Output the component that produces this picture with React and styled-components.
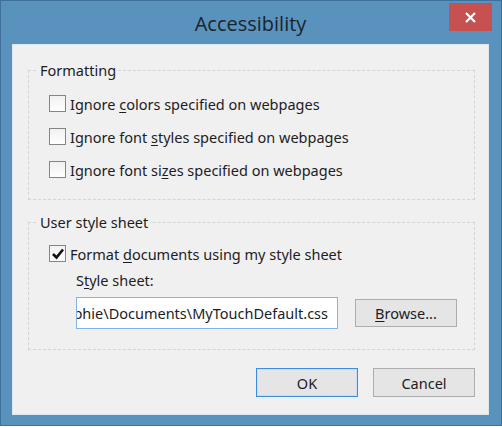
import * as React from "react"
import styled, { createGlobalStyle } from "styled-components"

const GlobalStyle = createGlobalStyle`
  html, body {
    margin: 0;
    padding: 0;
    background: #ffffff;
  }
  body {
    font-family: "Noto Sans", "Open Sans", sans-serif;
  }
`

const WindowFrame = styled.div`
  width: 502px;
  height: 426px;
  box-sizing: border-box;
  background-color: #5a92be;
  border: 1px solid #3e7099;
  display: flex;
  flex-direction: column;
  padding: 0 12px 10px 11px;
`

const TitleBar = styled.div`
  height: 43px;
  display: grid;
  grid-template-columns: 1fr auto 1fr;
  align-items: start;
`

const Title = styled.div`
  grid-column: 2;
  padding-top: 10px;
  font-family: "Open Sans", "Noto Sans", sans-serif;
  font-size: 20px;
  line-height: 26px;
  color: #1b242c;
`

const CloseButton = styled.div`
  grid-column: 3;
  justify-self: end;
  margin-top: 2px;
  margin-right: -3px;
  width: 43px;
  height: 28px;
  background-color: #c75050;
  display: flex;
  align-items: center;
  justify-content: center;
`

const Client = styled.div`
  flex: 1;
  background-color: #f0f0f0;
  border: 1px solid #dde6ee;
  box-sizing: border-box;
  padding: 15px 13px 0 15px;
  display: flex;
  flex-direction: column;
  color: #1c1c24;
  font-size: 14.5px;
`

const Group = styled.fieldset`
  margin: ${p => (p.$first ? "0" : "12px 0 0")};
  border: 1px dashed #d4d4d4;
  padding: ${p => p.$pad};
  display: flex;
  flex-direction: column;
  min-width: 0;
`

const Legend = styled.legend`
  margin-left: -11px;
  padding: 0 2px;
  line-height: 20px;
`

const CheckList = styled.div`
  display: flex;
  flex-direction: column;
  gap: 16px;
`

const CheckRow = styled.label`
  display: flex;
  align-items: center;
  gap: 4px;
  height: 17px;
  line-height: 20px;
  white-space: nowrap;
`

const Box = styled.span`
  width: 15px;
  height: 15px;
  border: 1px solid #858585;
  background: linear-gradient(#f1f1f1, #ffffff);
  display: flex;
  align-items: center;
  justify-content: center;
  flex-shrink: 0;
`

const Indented = styled.div`
  padding-left: 27px;
  display: flex;
  flex-direction: column;
`

const FieldLabel = styled.div`
  line-height: 20px;
  margin-top: 8px;
`

const FieldRow = styled.div`
  display: flex;
  align-items: center;
  gap: 17px;
  margin-top: 7px;
`

const PathBox = styled.div`
  width: 262px;
  height: 32px;
  box-sizing: border-box;
  border: 1px solid #7eb4ea;
  background: #ffffff;
  display: flex;
  align-items: center;
  justify-content: flex-end;
  overflow: hidden;
  white-space: nowrap;
  padding-right: 9px;
`

const Button = styled.div`
  width: 102px;
  height: ${p => p.$h || 29}px;
  box-sizing: border-box;
  border: 1px solid ${p => (p.$default ? "#3c8ede" : "#adadad")};
  box-shadow: ${p => (p.$default ? "inset 0 0 0 1px #c5ddf5" : "none")};
  background: #e5e5e5;
  display: flex;
  align-items: center;
  justify-content: center;
  flex-shrink: 0;
`

const ButtonBar = styled.div`
  display: flex;
  justify-content: flex-end;
  gap: 15px;
  margin-top: 18px;
`

const Key = styled.span`
  text-decoration: underline;
  text-underline-offset: 2px;
`

const CheckMark = () => (
  <svg width="14" height="14" viewBox="0 0 14 14">
    <path d="M2 7 L5.5 10.5 L12 2.5" fill="none" stroke="#111" strokeWidth="2.6" />
  </svg>
)

const Check = ({ checked, children }) => (
  <CheckRow>
    <Box>{checked && <CheckMark />}</Box>
    <span>{children}</span>
  </CheckRow>
)

export default function App() {
  return (
    <>
      <GlobalStyle />
      <WindowFrame>
        <TitleBar>
          <Title>Accessibility</Title>
          <CloseButton>
            <svg width="11" height="11" viewBox="0 0 11 11">
              <path d="M1 1 L10 10 M10 1 L1 10" stroke="#fff" strokeWidth="2.2" />
            </svg>
          </CloseButton>
        </TitleBar>
        <Client>
          <Group $first $pad="15px 12px 21px 20px">
            <Legend>Formatting</Legend>
            <CheckList>
              <Check>Ignore <Key>c</Key>olors specified on webpages</Check>
              <Check>Ignore font <Key>s</Key>tyles specified on webpages</Check>
              <Check>Ignore font si<Key>z</Key>es specified on webpages</Check>
            </CheckList>
          </Group>
          <Group $pad="13px 12px 20px 20px">
            <Legend>User style sheet</Legend>
            <Check checked>Format <Key>d</Key>ocuments using my style sheet</Check>
            <Indented>
              <FieldLabel>S<Key>t</Key>yle sheet:</FieldLabel>
              <FieldRow>
                <PathBox>C:\Users\Sophie\Documents\MyTouchDefault.css</PathBox>
                <Button $h={28}><span><Key>B</Key>rowse...</span></Button>
              </FieldRow>
            </Indented>
          </Group>
          <ButtonBar>
            <Button $default>OK</Button>
            <Button>Cancel</Button>
          </ButtonBar>
        </Client>
      </WindowFrame>
    </>
  )
}
